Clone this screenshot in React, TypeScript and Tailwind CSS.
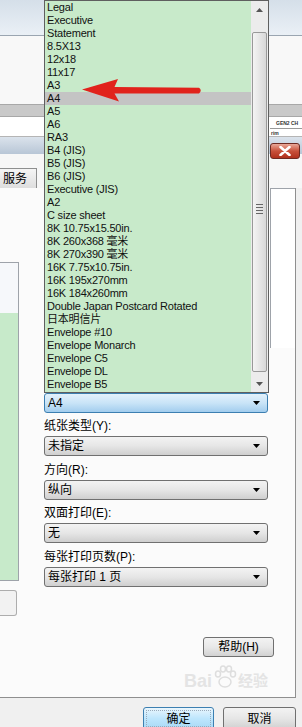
import React from "react";

const items = [
  "Legal",
  "Executive",
  "Statement",
  "8.5X13",
  "12x18",
  "11x17",
  "A3",
  "A4",
  "A5",
  "A6",
  "RA3",
  "B4 (JIS)",
  "B5 (JIS)",
  "B6 (JIS)",
  "Executive (JIS)",
  "A2",
  "C size sheet",
  "8K 10.75x15.50in.",
  "8K 260x368 毫米",
  "8K 270x390 毫米",
  "16K 7.75x10.75in.",
  "16K 195x270mm",
  "16K 184x260mm",
  "Double Japan Postcard Rotated",
  "日本明信片",
  "Envelope #10",
  "Envelope Monarch",
  "Envelope C5",
  "Envelope DL",
  "Envelope B5",
];

function DownArrow({ color = "#000" }: { color?: string }) {
  return (
    <svg width="7" height="4" viewBox="0 0 7 4">
      <path d="M0 0H7L3.5 4Z" fill={color} />
    </svg>
  );
}

function UpArrow({ color = "#000" }: { color?: string }) {
  return (
    <svg width="7" height="4" viewBox="0 0 7 4">
      <path d="M0 4H7L3.5 0Z" fill={color} />
    </svg>
  );
}

function Combo({ text, focused }: { text: string; focused?: boolean }) {
  return (
    <div
      className={
        focused
          ? "h-[20px] w-[224px] rounded-[3px] border border-[#3c7fb1] bg-linear-to-b from-[#e3f1fb] via-[#c9e4f7] to-[#a2cdee] flex items-center justify-between pl-[3px] pr-[7px] text-[12px] leading-[18px]"
          : "h-[20px] w-[224px] rounded-[3px] border border-[#707070] bg-linear-to-b from-[#f3f3f3] via-[#e6e6e6] to-[#cfcfcf] flex items-center justify-between pl-[3px] pr-[7px] text-[12px] leading-[18px]"
      }
    >
      <span>{text}</span>
      <DownArrow />
    </div>
  );
}

function Label({ text, tall }: { text: string; tall?: boolean }) {
  return (
    <div
      className={
        tall
          ? "h-[24px] pt-[6px] text-[12px] leading-[16px]"
          : "h-[23px] pt-[6px] text-[12px] leading-[15px]"
      }
    >
      {text}
    </div>
  );
}

export default function App() {
  return (
    <div className="relative w-[302px] h-[727px] overflow-hidden bg-[#f0f0f0] text-black font-['Liberation_Sans','Noto_Sans_CJK_SC',sans-serif]">
      {/* background window bands */}
      <div className="h-[35px] bg-linear-to-b from-[#d5dfe9] to-[#eaf0f6]" />
      <div className="h-px bg-[#9aa5b1]" />
      <div className="h-[68px] bg-[#f8f8f8]" />
      <div className="h-[13px] bg-[#c9c9c9] border-y border-[#a8a8a8]" />
      <div className="h-[20px] bg-white border-b border-[#b5b5b5] flex justify-end">
        <div className="w-[32px] flex flex-col text-[5px] leading-[6px] font-bold text-[#333]">
          <div className="h-[12px] border-b border-[#999] flex items-center pl-[6px] whitespace-nowrap">
            GEN2 CH
          </div>
          <div className="h-[7px] pl-[1px] flex items-center">rim</div>
        </div>
      </div>
      <div className="relative h-[17px] bg-linear-to-b from-[#dbe3ec] to-[#b8c6d6]">
        <div className="absolute right-[2px] top-[6px] w-[30px] h-[16px] rounded-[3px] border border-[#6e2a22] bg-linear-to-b from-[#e9a899] via-[#c8503a] to-[#b0301c] flex items-center justify-center">
          <svg width="12" height="10" viewBox="0 0 12 10">
            <path d="M1.5 1L10.5 9M10.5 1L1.5 9" stroke="#fff" strokeWidth="2.6" strokeLinecap="round" />
          </svg>
        </div>
      </div>
      <div className="h-[34px] bg-[#f7f7f7] flex items-end">
        <div className="-ml-[20px] w-[57px] h-[20px] border border-b-0 border-[#8e8f8f] bg-linear-to-b from-[#f5f5f5] to-[#dedede] flex items-center justify-end pr-[9px] text-[12px] leading-[14px]">
          服务
        </div>
      </div>

      {/* panel */}
      <div className="flex h-[510px] w-[296px] border-r border-b border-[#8f8f8f] bg-[#fbfbfb]">
        <div className="w-[19px] pt-[74px] flex flex-col">
          <div className="h-[319px] border-r border-y border-[#9ea3aa] flex flex-col">
            <div className="h-[50px] bg-[#f6f8fb]" />
            <div className="flex-1 bg-[#c7eaca]" />
          </div>
          <div className="mt-[9px] h-[26px] w-[17px] border border-l-0 border-[#adadad] rounded-r-[3px] bg-[#f2f2f2]" />
        </div>
        <div className="ml-[25px] w-[226px] pt-[205px] flex flex-col">
          <Combo text="A4" focused />
          <Label text="纸张类型(Y):" />
          <Combo text="未指定" />
          <Label text="方向(R):" tall />
          <Combo text="纵向" />
          <Label text="双面打印(E):" />
          <Combo text="无" />
          <Label text="每张打印页数(P):" tall />
          <Combo text="每张打印 1 页" />
          <div className="mt-[50px] ml-[159px] w-[71px] h-[20px] shrink-0 rounded-[3px] border border-[#707070] bg-linear-to-b from-[#f3f3f3] via-[#e8e8e8] to-[#d2d2d2] flex items-center justify-center text-[12px]">
            帮助(H)
          </div>
        </div>
        <div className="flex-1">
          <div className="h-[160px] border-l border-t border-[#9ea3aa] bg-white" />
        </div>
      </div>

      {/* bottom buttons */}
      <div className="flex pl-[143px] pt-[9px] gap-[9px]">
        <div className="w-[71px] h-[23px] rounded-[3px] border border-[#3c7fb1] bg-linear-to-b from-[#eaf6fd] via-[#bee6fd] to-[#a7d9f5] p-[2px] text-[12px]">
          <div className="h-full w-full border border-dotted border-[#9ab] flex items-center justify-center leading-[14px]">确定</div>
        </div>
        <div className="w-[73px] h-[23px] rounded-[3px] border border-[#707070] bg-linear-to-b from-[#f3f3f3] via-[#e6e6e6] to-[#d0d0d0] flex items-center justify-center text-[12px]">
          取消
        </div>
      </div>

      {/* baidu watermark */}
      <div className="absolute left-[184px] top-[664px] flex items-end text-[#e4e4e4] font-bold text-[18px] leading-[20px] select-none">
        <span>Bai</span>
        <svg width="26" height="26" viewBox="0 0 26 26" className="mb-[1px]">
          <g fill="none" stroke="#dedede" strokeWidth="1.5">
            <ellipse cx="13" cy="18" rx="6" ry="5" />
            <ellipse cx="6" cy="10" rx="2.5" ry="3" />
            <ellipse cx="11" cy="5" rx="2.5" ry="3" />
            <ellipse cx="17" cy="5" rx="2.5" ry="3" />
            <ellipse cx="21" cy="10" rx="2.5" ry="3" />
          </g>
        </svg>
        <span className="text-[15px]">经验</span>
      </div>

      {/* open dropdown list */}
      <div className="absolute left-[44px] top-0 w-[225px] h-[393px] border border-[#5f5f5f] flex bg-[#c8eaca]">
        <div className="flex-1 flex flex-col text-[11px] leading-[13px] tracking-[-0.2px] text-[#111]">
          {items.map((it) => (
            <div
              key={it}
              className={
                it === "A4"
                  ? "h-[13px] pl-[2px] bg-[#c4c4c4] whitespace-nowrap"
                  : "h-[13px] pl-[2px] whitespace-nowrap"
              }
            >
              {it}
            </div>
          ))}
        </div>
        <div className="w-[17px] bg-[#ececec] flex flex-col">
          <div className="h-[17px] flex items-center justify-center">
            <UpArrow color="#555" />
          </div>
          <div className="mt-[14px] mb-[3px] flex-1 mx-[1px] rounded-[2px] border border-[#999] bg-linear-to-r from-[#f4f4f4] to-[#d8d8d8] flex items-center justify-center">
            <div className="flex flex-col gap-[2px] mt-[14px]">
              <div className="w-[7px] h-px bg-[#666]" />
              <div className="w-[7px] h-px bg-[#666]" />
              <div className="w-[7px] h-px bg-[#666]" />
              <div className="w-[7px] h-px bg-[#666]" />
            </div>
          </div>
          <div className="h-[17px] flex items-center justify-center">
            <DownArrow color="#555" />
          </div>
        </div>
      </div>

      {/* red arrow */}
      <svg className="absolute left-[78px] top-[76px]" width="130" height="28" viewBox="0 0 130 28">
        <path
          d="M4 13.5L40 3L36.5 11L121 11.8Q124.5 14.5 121 17.5L36.5 17.5L41 25.5Z"
          fill="#e1221c"
        />
      </svg>
    </div>
  );
}
